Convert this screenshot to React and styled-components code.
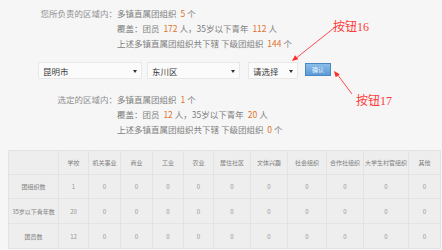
import React from 'react'
import styled, { createGlobalStyle } from 'styled-components'

const GlobalStyle = createGlobalStyle`
    body {
        margin: 0;
        background: #f6f6f6;
        font-family: "Noto Sans CJK SC", "Noto Sans", sans-serif;
    }
`

const Page = styled.div`
    position: relative;
    box-sizing: border-box;
    width: 442px;
    height: 250px;
    padding: 6px 2px 0px 8px;
    overflow: hidden;
`

const Summary = styled.div`
    display: grid;
    grid-template-columns: 109px auto;
    margin-top: ${props => props.$top || 0}px;
    font-size: 8.5px;
    line-height: 15px;
    color: #808080;
    white-space: nowrap;
`

const Label = styled.span`
    text-align: right;
    color: #8f8f8f;
`

const Num = styled.span`
    color: #e0732c;
    padding: 0px 2px;
`

const FilterRow = styled.div`
    display: flex;
    align-items: center;
    margin-top: 11px;
    height: 17px;
`

const Select = styled.div`
    position: relative;
    box-sizing: border-box;
    display: flex;
    align-items: center;
    width: ${props => props.$width}px;
    height: 17px;
    margin-left: ${props => props.$ml}px;
    padding-left: 4px;
    border: 1px solid #e8e8e8;
    background: #fbfbfb;
    font-size: 8.5px;
    color: #3a3a3a;

    &::after {
        content: '';
        position: absolute;
        right: 4px;
        top: 7px;
        border-left: 2.5px solid transparent;
        border-right: 2.5px solid transparent;
        border-top: 3px solid #333333;
    }
`

const ConfirmButton = styled.button`
    box-sizing: border-box;
    width: 26px;
    height: 13px;
    margin-left: 7px;
    margin-top: -3px;
    padding: 0px;
    border: 1px solid #4a88c4;
    background: linear-gradient(#8cbde9, #5a9ad6);
    color: #eaf3ff;
    font-family: "Noto Sans CJK SC", sans-serif;
    font-size: 6px;
    line-height: 11px;
`

const Table = styled.table`
    margin-top: 13px;
    width: 432px;
    border-collapse: collapse;
    table-layout: fixed;
    background: #eeeeee;
    font-size: 6px;
    color: #808080;
`

const Cell = styled.td`
    height: ${props => props.$h || 24}px;
    padding: 0px;
    border: 1px solid #e3e3e3;
    text-align: center;
    white-space: nowrap;
    overflow: hidden;
    color: ${props => props.$num ? '#959595' : '#808080'};
`

const Note = styled.div`
    position: absolute;
    left: ${props => props.$x}px;
    top: ${props => props.$y}px;
    font-family: "Liberation Serif", "Noto Sans CJK SC", serif;
    font-size: 12px;
    line-height: 14px;
    color: #ff3b3b;
`

const Arrows = styled.svg`
    position: absolute;
    left: 0px;
    top: 0px;
    pointer-events: none;
`

const widths = [50, 30, 32, 32, 31, 30, 37, 37, 39, 37, 45, 32]
const heads = ['学校', '机关事业', '商业', '工业', '农业', '居住社区', '文体兴趣', '社会组织', '合作社组织', '大学生村官组织', '其他']
const rows = [
    ['团组织数', 1],
    ['35岁以下青年数', 20],
    ['团员数', 12],
]

export default function App() {
    return (
        <Page>
            <GlobalStyle />
            <Summary>
                <Label>{'您所负责的区域内：'}</Label>
                <span>{'多镇直属团组织'} <Num>5</Num>{'个'}</span>
                <span />
                <span>{'覆盖：团员 '}<Num>172</Num>{'人，35岁以下青年 '}<Num>112</Num>{'人'}</span>
                <span />
                <span>{'上述多镇直属团组织共下辖 下级团组织 '}<Num>144</Num>{'个'}</span>
            </Summary>

            <FilterRow>
                <Select $width={104} $ml={30}>{'昆明市'}</Select>
                <Select $width={93} $ml={5}>{'东川区'}</Select>
                <Select $width={50} $ml={8}>{'请选择'}</Select>
                <ConfirmButton>{'确认'}</ConfirmButton>
            </FilterRow>

            <Summary $top={13}>
                <Label>{'选定的区域内：'}</Label>
                <span>{'多镇直属团组织'} <Num>1</Num>{'个'}</span>
                <span />
                <span>{'覆盖：团员 '}<Num>12</Num>{'人，35岁以下青年 '}<Num>20</Num>{'人'}</span>
                <span />
                <span>{'上述多镇直属团组织共下辖 下级团组织 '}<Num>0</Num>{'个'}</span>
            </Summary>

            <Table>
                <colgroup>
                    {widths.map((w, i) => <col key={i} style={{ width: w }} />)}
                </colgroup>
                <tbody>
                    <tr>
                        <Cell $h={23} />
                        {heads.map(h => <Cell key={h} $h={23}>{h}</Cell>)}
                    </tr>
                    {rows.map(([name, first], r) => (
                        <tr key={name}>
                            <Cell $h={r === 0 ? 23 : 24}>{name}</Cell>
                            <Cell $num $h={r === 0 ? 23 : 24}>{first}</Cell>
                            {heads.slice(1).map(h => <Cell key={h} $num $h={r === 0 ? 23 : 24}>0</Cell>)}
                        </tr>
                    ))}
                </tbody>
            </Table>

            <Note $x={333} $y={20}>{'按钮16'}</Note>
            <Note $x={356} $y={94}>{'按钮17'}</Note>
            <Arrows width="442" height="250" viewBox="0 0 442 250">
                <line x1="334" y1="28" x2="295" y2="59" stroke="#ff4a4a" strokeWidth="1" />
                <polygon points="292,61 298.3,59.2 295.1,55.2" fill="#ff2a2a" />
                <line x1="352" y1="94" x2="337" y2="74" stroke="#ff4a4a" strokeWidth="1" />
                <polygon points="334,71 339.7,74.2 335.7,77.2" fill="#ff2a2a" />
            </Arrows>
        </Page>
    )
}
